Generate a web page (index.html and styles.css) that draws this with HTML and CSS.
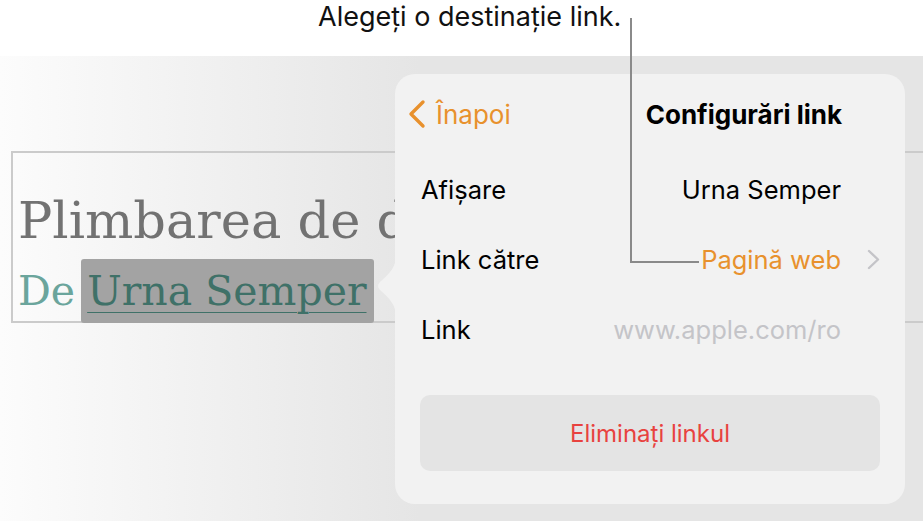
FILE: index.html
```html
<!DOCTYPE html>
<html lang="ro">
<head>
    <meta charset="UTF-8">
    <meta name="viewport" content="width=device-width, initial-scale=1.0">
    <title>Configurări link</title>
    <link rel="stylesheet" href="styles.css">
</head>
<body>
    <div class="page">
        <div class="caption">Alegeți o destinație link.</div>

        <div class="scene">
            <div class="doc">
                <p class="doc-title">Plimbarea de dimineață</p>
                <p class="doc-byline">De <span class="sel">Urna Semper</span></p>
            </div>

            <div class="popover">
                <svg class="popover-arrow" width="20" height="62" viewBox="0 0 20 62">
                    <path d="M20 0 C20 12 14 18 4 27 Q0 31 4 35 C14 44 20 50 20 62 Z" fill="#f2f2f2"/>
                </svg>

                <div class="nav">
                    <a href="#" class="back">
                        <svg width="20" height="30" viewBox="0 0 20 30">
                            <path d="M16 3 L4 15 L16 27" fill="none" stroke="#e8912d" stroke-width="3.4" stroke-linecap="round" stroke-linejoin="round"/>
                        </svg>
                        Înapoi
                    </a>
                    <span class="nav-title">Configurări link</span>
                </div>

                <div class="row">
                    <span class="label">Afișare</span>
                    <span class="value">Urna Semper</span>
                    <span class="disclosure"></span>
                </div>
                <div class="row">
                    <span class="label">Link către</span>
                    <span class="value accent">Pagină web</span>
                    <span class="disclosure">
                        <svg width="13" height="21" viewBox="0 0 13 21">
                            <path d="M2 2 L11 10.5 L2 19" fill="none" stroke="#c4c4c8" stroke-width="2.4" stroke-linecap="round" stroke-linejoin="round"/>
                        </svg>
                    </span>
                </div>
                <div class="row">
                    <span class="label">Link</span>
                    <span class="value muted">www.apple.com/ro</span>
                    <span class="disclosure"></span>
                </div>

                <button class="remove">Eliminați linkul</button>
            </div>
        </div>

        <!-- callout from caption to the "Link către" value -->
        <div class="callout-line"></div>
    </div>
</body>
</html>
```

FILE: styles.css
```css
body {
    margin: 0;
    background: #fff;
    font-family: Inter, "Noto Sans", sans-serif;
}

.page {
    position: relative;
    width: 923px;
    height: 524px;
    overflow: hidden;
}

.caption {
    height: 56px;
    padding-left: 318px;
    box-sizing: border-box;
    font-size: 27px;
    line-height: 34px;
    color: #111;
}

.scene {
    position: relative;
    height: 465px;
    overflow: hidden;
    background: linear-gradient(to right, #fcfcfc 0, #f1f1f1 200px, #e5e5e5 420px, #e5e5e5 100%);
}

/* document text behind the popover */
.doc {
    margin: 95px 0 0 11px;
    height: 172px;
    box-sizing: border-box;
    border: 2px solid #cbcbcb;
    border-right: none;
    padding: 38px 0 0 5px;
    font-family: "DejaVu Serif", serif;
    white-space: nowrap;
}

.doc p {
    margin: 0;
}

.doc-title {
    font-size: 51px;
    line-height: 60px;
    color: #727272;
}

.doc .doc-byline {
    display: flex;
    align-items: baseline;
    margin-top: 8px;
    font-size: 41px;
    line-height: 64px;
    color: #6ba59c;
}

.sel {
    display: inline-block;
    height: 64px;
    padding: 0 7px 0 6px;
    margin-left: 6px;
    background: #a3a3a3;
    border-radius: 3px;
    color: #3f7168;
    text-decoration: underline;
    text-decoration-thickness: 1px;
    text-underline-offset: 7px;
}

/* popover */
.popover {
    position: absolute;
    left: 395px;
    top: 18px;
    width: 510px;
    padding-bottom: 33px;
    background: #f2f2f2;
    border-radius: 20px;
}

.popover-arrow {
    position: absolute;
    left: -19px;
    top: 181px;
}

.nav {
    display: flex;
    align-items: center;
    justify-content: space-between;
    height: 80px;
    padding: 0 63px 0 12px;
}

.back {
    display: flex;
    align-items: center;
    gap: 9px;
    color: #e8912d;
    text-decoration: none;
    font-size: 26px;
}

.nav-title {
    font-size: 26px;
    font-weight: 700;
    color: #000;
}

.row {
    display: flex;
    align-items: center;
    height: 70px;
    padding: 0 25px 0 26px;
    font-size: 25.5px;
    color: #000;
}

.label {
    flex: 1;
}

.value.accent {
    color: #e8912d;
}

.value.muted {
    color: #c4c4c8;
}

.disclosure {
    width: 39px;
    display: flex;
    justify-content: flex-end;
}

.remove {
    display: block;
    width: 460px;
    height: 76px;
    margin: 31px 0 0 25px;
    border: none;
    border-radius: 10px;
    background: #e4e4e4;
    color: #e8423f;
    font-family: Inter, "Noto Sans", sans-serif;
    font-size: 24px;
}

.callout-line {
    position: absolute;
    left: 630px;
    top: 18px;
    width: 67px;
    height: 243px;
    border-left: 2px solid #8a8a8a;
    border-bottom: 2px solid #8a8a8a;
}
```
